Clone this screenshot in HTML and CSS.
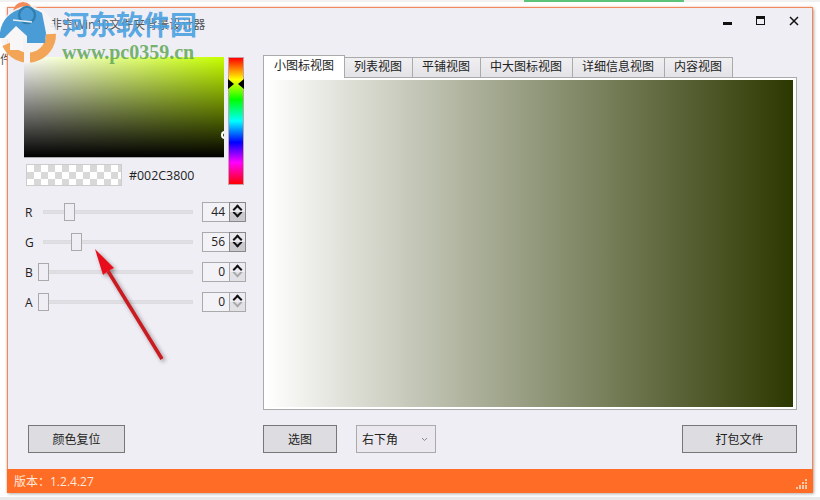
FILE: index.html
```html
<!DOCTYPE html>
<html lang="zh-CN">
<head>
    <meta charset="UTF-8">
    <title>非空Win10文件夹背景设计器</title>
    <link rel="stylesheet" href="styles.css">
</head>
<body>
    <div class="top-strip"><span class="green-tab"></span></div>
    <div class="bottom-strip"></div>
    <span class="stray-char">件</span>

    <div class="window">
        <!-- Title bar -->
        <div class="titlebar">
            <span class="title">非空Win10文件夹背景设计器</span>
            <div class="win-buttons">
                <svg width="10" height="10" viewBox="0 0 10 10"><rect x="0" y="6" width="9" height="3" fill="#111"/></svg>
                <svg width="10" height="10" viewBox="0 0 10 10"><rect x="0.5" y="0.5" width="8" height="8" fill="none" stroke="#111"/><rect y="0" width="9" height="3" fill="#111"/></svg>
                <svg width="10" height="10" viewBox="0 0 10 10"><path d="M1 1L9 9M9 1L1 9" stroke="#111" stroke-width="1.5" fill="none"/></svg>
            </div>
        </div>

        <!-- Main area -->
        <div class="main">
            <div class="left-col">
                <div class="picker-row">
                    <div class="picker-left">
                        <div class="picker"><span class="picker-dot"></span></div>
                        <div class="color-row">
                            <div class="swatch"></div>
                            <span class="hex">#002C3800</span>
                        </div>
                    </div>
                    <div class="hue">
                        <svg class="hue-marks" width="16" height="10" viewBox="0 0 16 10"><path d="M0 0L6 5L0 10Z M16 0L10 5L16 10Z" fill="#000"/></svg>
                    </div>
                </div>

                <div class="sliders">
                    <div class="slider-row">
                        <span class="slider-label">R</span>
                        <div class="track"><span class="thumb thumb-r"></span></div>
                        <div class="spin"><span class="spin-value">44</span><div class="spin-btns"><span class="arrow-up"></span><span class="arrow-down"></span></div></div>
                    </div>
                    <div class="slider-row">
                        <span class="slider-label">G</span>
                        <div class="track"><span class="thumb thumb-g"></span></div>
                        <div class="spin"><span class="spin-value">56</span><div class="spin-btns"><span class="arrow-up"></span><span class="arrow-down"></span></div></div>
                    </div>
                    <div class="slider-row">
                        <span class="slider-label">B</span>
                        <div class="track"><span class="thumb"></span></div>
                        <div class="spin"><span class="spin-value">0</span><div class="spin-btns min"><span class="arrow-up"></span><span class="arrow-down"></span></div></div>
                    </div>
                    <div class="slider-row">
                        <span class="slider-label">A</span>
                        <div class="track"><span class="thumb"></span></div>
                        <div class="spin"><span class="spin-value">0</span><div class="spin-btns min"><span class="arrow-up"></span><span class="arrow-down"></span></div></div>
                    </div>
                </div>
            </div>

            <div class="right-col">
                <div class="tabs">
                    <span class="tab active">小图标视图</span>
                    <span class="tab">列表视图</span>
                    <span class="tab">平铺视图</span>
                    <span class="tab">中大图标视图</span>
                    <span class="tab">详细信息视图</span>
                    <span class="tab">内容视图</span>
                </div>
                <div class="tab-panel"><div class="preview"></div></div>
            </div>
        </div>

        <!-- Bottom buttons -->
        <div class="footer">
            <button class="btn btn-reset">颜色复位</button>
            <button class="btn btn-pick">选图</button>
            <div class="select">右下角<svg width="7" height="5" viewBox="0 0 7 5"><path d="M1 1L3.5 3.5L6 1" stroke="#888" fill="none"/></svg></div>
            <button class="btn btn-pack">打包文件</button>
        </div>

        <!-- Status bar -->
        <div class="statusbar">
            <span>版本：1.2.4.27</span>
            <svg class="grip" width="11" height="11" viewBox="0 0 11 11" fill="#f7c9a8"><rect x="9" y="1" width="2" height="2"/><rect x="9" y="4" width="2" height="2"/><rect x="9" y="7" width="2" height="2"/><rect x="9" y="9" width="2" height="2"/><rect x="6" y="4" width="2" height="2"/><rect x="6" y="7" width="2" height="2"/><rect x="6" y="9" width="2" height="2"/><rect x="3" y="7" width="2" height="2"/><rect x="3" y="9" width="2" height="2"/><rect x="0" y="9" width="2" height="2"/></svg>
        </div>
    </div>

    <!-- Red arrow drawn over the screenshot -->
    <svg class="red-arrow" width="90" height="130" viewBox="85 240 90 130">
        <defs><filter id="arrowShadow" x="-30%" y="-30%" width="160%" height="160%"><feDropShadow dx="2" dy="2" stdDeviation="2" flood-color="#000" flood-opacity="0.4"/></filter></defs>
        <g filter="url(#arrowShadow)">
            <path d="M162 359L108 271" stroke="#c81e22" stroke-width="3.6" fill="none"/>
            <path d="M95 249L114 268L108 271L103 275Z" fill="#e8101c"/>
        </g>
    </svg>

    <!-- Site watermark -->
    <div class="watermark">
        <svg class="wm-logo" width="60" height="66" viewBox="0 0 60 66">
            <circle cx="24" cy="12" r="10" fill="#f28a5a"/>
            <circle cx="29" cy="34" r="28" fill="#f6f3f4" opacity="0.9"/>
            <path d="M8 44A23 23 0 0 0 52 34" fill="none" stroke="#f2a556" stroke-width="10"/>
            <rect x="25" y="44" width="6" height="19" fill="#f6f3f4"/>
            <path d="M1 38A27 27 0 0 1 43 13L47 33L46 43L28 43L28 36L17 26L5 38Z" fill="#4a9cd6"/>
            <circle cx="28" cy="15" r="8" fill="none" stroke="#2f7fb0" stroke-width="2.5"/>
            <path d="M14 20L33 22" stroke="#e8eef4" stroke-width="1.5"/>
            <path d="M5 39L17 27L28 38L24 38L24 50L11 50L11 39Z" fill="#f8f6f7"/>
        </svg>
        <div class="wm-text">河东软件园</div>
        <div class="wm-url">www.pc0359.cn</div>
    </div>
</body>
</html>
```

FILE: styles.css
```css
/* Page */
html, body {
    margin: 0;
    padding: 0;
}

body {
    position: relative;
    width: 820px;
    height: 500px;
    overflow: hidden;
    background: #fff;
    font-family: "Open Sans", "Noto Sans CJK SC", sans-serif;
    font-size: 12px;
    color: #222;
    padding-top: 7px;
    box-sizing: border-box;
}

/* Bits of the desktop behind the window */
.top-strip {
    position: absolute;
    top: 0;
    left: 0;
    width: 100%;
    height: 2px;
    background: #f1f1f1;
}

.bottom-strip {
    position: absolute;
    bottom: 0;
    left: 0;
    width: 100%;
    height: 3px;
    background: #e9e9e9;
}

.green-tab {
    position: absolute;
    left: 524px;
    width: 160px;
    height: 2px;
    background: #5cc47a;
}

.stray-char {
    position: absolute;
    left: 0;
    top: 50px;
    color: #555;
}

/* Window */
.window {
    position: relative;
    width: 806px;
    height: 485px;
    margin-left: 7px;
    box-sizing: border-box;
    border: 1px solid #f08a5c;
    border-bottom: none;
    background: #f0eef5;
    box-shadow: 0 0 2px rgba(240, 120, 70, 0.5), 1px 2px 3px rgba(0, 0, 0, 0.3);
    display: flex;
    flex-direction: column;
}

/* Title bar */
.titlebar {
    height: 47px;
    flex: none;
    display: flex;
    justify-content: space-between;
    padding: 8px 13px 0 42px;
    box-sizing: border-box;
}

.title {
    font-size: 12px;
    color: #555;
    line-height: 18px;
}

.win-buttons {
    display: flex;
    gap: 23px;
}

/* Main area */
.main {
    flex: 1;
    display: flex;
}

.left-col {
    width: 255px;
    flex: none;
    padding: 2px 0 0 16px;
    box-sizing: border-box;
}

.picker-row {
    display: flex;
    gap: 4px;
}

.picker {
    position: relative;
    width: 200px;
    height: 101px;
    box-sizing: border-box;
    border-bottom: 1px solid #aaa;
    overflow: hidden;
    background:
        linear-gradient(to bottom, transparent, #000),
        linear-gradient(to right, #fff, #c7ff00);
}

.picker-dot {
    position: absolute;
    right: -5px;
    top: 74px;
    width: 4px;
    height: 4px;
    border: 2px solid #fff;
    border-radius: 50%;
}

.color-row {
    display: flex;
    align-items: center;
    gap: 7px;
    margin: 6px 0 0 2px;
}

.swatch {
    width: 96px;
    height: 22px;
    box-sizing: border-box;
    border: 1px solid #ccc;
    background: repeating-conic-gradient(#d8d8d8 0 25%, #fff 0 50%) 0 0 / 14px 14px;
}

.hex {
    font-size: 12.4px;
}

.hue {
    position: relative;
    width: 16px;
    height: 128px;
    box-sizing: border-box;
    border: 1px solid #c9a0a8;
    background: linear-gradient(to bottom, #f00, #ff0 17%, #0f0 33%, #0ff 50%, #00f 67%, #f0f 83%, #f00);
}

.hue-marks {
    position: absolute;
    left: -1px;
    top: 21px;
}

/* Sliders */
.sliders {
    margin-top: 16px;
    display: flex;
    flex-direction: column;
    gap: 10px;
}

.slider-row {
    display: flex;
    align-items: center;
    height: 20px;
}

.slider-label {
    width: 19px;
    padding-left: 1px;
    box-sizing: border-box;
    font-size: 12px;
}

.track {
    position: relative;
    width: 150px;
    height: 4px;
    background: #e0dfe3;
    border: 1px solid #dcdbe0;
    box-sizing: border-box;
}

.thumb {
    position: absolute;
    left: -6px;
    top: -8px;
    width: 11px;
    height: 18px;
    box-sizing: border-box;
    background: #f0eef5;
    border: 1px solid #aaa;
}

.thumb-r {
    left: 20px;
}

.thumb-g {
    left: 27px;
}

.spin {
    display: flex;
    width: 44px;
    height: 20px;
    box-sizing: border-box;
    margin-left: 9px;
    border: 1px solid #aaa;
    background: #f3f2f7;
}

.spin-value {
    flex: 1;
    text-align: right;
    line-height: 18px;
    padding-right: 4px;
    font-size: 12px;
}

.spin-btns {
    width: 17px;
    flex: none;
    margin: -1px -1px -1px 0;
    box-sizing: border-box;
    border: 1px solid #888;
    display: flex;
    flex-direction: column;
}

.spin-btns.min {
    border-color: #aaa;
}

.spin-btns span {
    flex: 1;
    display: block;
    position: relative;
    overflow: hidden;
}

.arrow-up {
    background: #e9e8ec;
}

.arrow-down {
    background: #cbcacf;
}

.arrow-up::after, .arrow-down::after {
    content: "";
    position: absolute;
    left: 4px;
    width: 7px;
    height: 7px;
    box-sizing: border-box;
    border-left: 2px solid #111;
    border-top: 2px solid #111;
}

.arrow-up::after {
    top: 3px;
    transform: rotate(45deg);
}

.arrow-down::after {
    top: -3px;
    transform: rotate(225deg);
}

.spin-btns.min .arrow-up {
    background: #eeecf2;
}

.spin-btns.min .arrow-down {
    background: #e2e1e6;
}

.spin-btns.min .arrow-down::after {
    border-color: #aaa;
}

/* Tabs */
.right-col {
    width: 534px;
    display: flex;
    flex-direction: column;
}

.tabs {
    display: flex;
    align-items: flex-end;
    height: 22px;
    flex: none;
}

.tab {
    height: 20px;
    line-height: 18px;
    padding: 0 10px 0 9px;
    box-sizing: border-box;
    border: 1px solid #aaa;
    border-left: none;
    border-bottom: none;
    background: linear-gradient(#f0eff2, #e3e2e6);
    white-space: nowrap;
}

.tab.active {
    height: 23px;
    margin-bottom: -1px;
    position: relative;
    border-left: 1px solid #aaa;
    padding: 0 10px;
    line-height: 20px;
    background: #fff;
}

.tab-panel {
    height: 333px;
    box-sizing: border-box;
    border: 1px solid #aaa;
    background: #fff;
    padding: 2px;
}

.preview {
    height: 100%;
    margin-right: 1px;
    background: linear-gradient(to right, #fff, #2c3800);
}

/* Bottom buttons */
.footer {
    height: 59px;
    flex: none;
    display: flex;
    align-items: flex-start;
    padding: 15px 0 0 20px;
    box-sizing: border-box;
}

.btn {
    height: 28px;
    box-sizing: border-box;
    border: 1px solid #777;
    background: #dddce0;
    font: inherit;
    color: #222;
    padding: 0;
}

.btn-reset {
    width: 97px;
}

.btn-pick {
    width: 74px;
    margin-left: 138px;
}

.select {
    width: 80px;
    height: 28px;
    margin-left: 19px;
    box-sizing: border-box;
    border: 1px solid #aaa;
    background: #ebe9ef;
    display: flex;
    align-items: center;
    justify-content: space-between;
    padding: 0 7px 0 5px;
    font-size: 12px;
}

.btn-pack {
    width: 115px;
    margin-left: 246px;
}

/* Status bar */
.statusbar {
    height: 24px;
    flex: none;
    background: #ff6c26;
    color: #ffe9dc;
    display: flex;
    align-items: center;
    justify-content: space-between;
    padding: 0 6px 0 7px;
    margin: 0 -1px;
    font-size: 12px;
}

.grip {
    align-self: flex-end;
    margin-bottom: 4px;
}

/* Overlays */
.red-arrow {
    position: absolute;
    left: 85px;
    top: 240px;
}

.watermark {
    position: absolute;
    left: 0;
    top: 0;
    width: 240px;
    height: 70px;
}

.wm-logo {
    position: absolute;
    left: -1px;
    top: 0;
}

.wm-text {
    position: absolute;
    left: 62px;
    top: 7px;
    font-family: "Noto Sans CJK SC", sans-serif;
    font-weight: 700;
    font-size: 27px;
    line-height: 34px;
    color: rgba(70, 160, 225, 0.9);
}

.wm-url {
    position: absolute;
    left: 62px;
    top: 42px;
    font-family: "Liberation Serif", serif;
    font-weight: 700;
    font-size: 20px;
    line-height: 20px;
    color: rgba(100, 170, 90, 0.9);
}
```
